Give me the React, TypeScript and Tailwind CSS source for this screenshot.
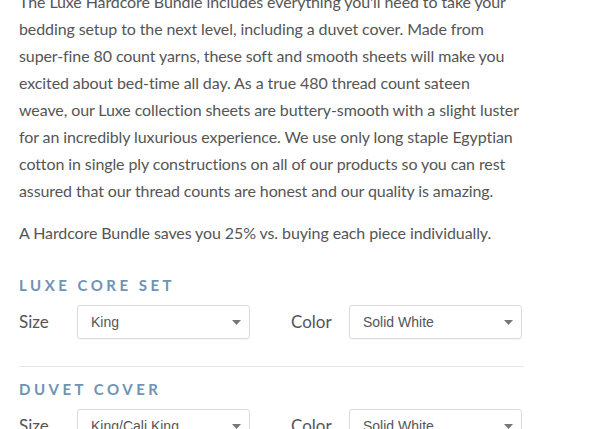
import React from "react";

const lines = [
  "The Luxe Hardcore Bundle includes everything you'll need to take your",
  "bedding setup to the next level, including a duvet cover. Made from",
  "super-fine 80 count yarns, these soft and smooth sheets will make you",
  "excited about bed-time all day. As a true 480 thread count sateen",
  "weave, our Luxe collection sheets are buttery-smooth with a slight luster",
  "for an incredibly luxurious experience. We use only long staple Egyptian",
  "cotton in single ply constructions on all of our products so you can rest",
  "assured that our thread counts are honest and our quality is amazing.",
];

function Select({ value }: { value: string }) {
  return (
    <div className="flex h-[34px] w-[173px] items-center justify-between rounded-[3px] border border-[#dcdcdc] bg-white pl-[13px] pr-[8px] shadow-[0_1px_1px_rgba(0,0,0,0.04)]">
      <span className="text-[14px] text-[#555]" style={{ fontFamily: '"Liberation Sans", Arial, sans-serif' }}>
        {value}
      </span>
      <svg width="9" height="5" viewBox="0 0 9 5">
        <path d="M0 0 L9 0 L4.5 5 Z" fill="#777" />
      </svg>
    </div>
  );
}

function Row({ size, color }: { size: string; color: string }) {
  return (
    <div className="grid grid-cols-[232px_232px] gap-x-[40px]">
      <div className="flex items-center">
        <span className="w-[58px] text-[17px] text-[#555]">Size</span>
        <Select value={size} />
      </div>
      <div className="flex items-center">
        <span className="w-[58px] text-[17px] text-[#555]">Color</span>
        <Select value={color} />
      </div>
    </div>
  );
}

export default function App() {
  return (
    <div
      className="h-[429px] w-[595px] overflow-hidden bg-white pl-[19px] text-[#555]"
      style={{ fontFamily: 'Lato, "Open Sans", sans-serif' }}
    >
      <div className="w-[505px]">
        <div className="mt-[-12px] text-[16px] leading-[27px] tracking-[-0.1px]">
          {lines.map((l, i) => (
            <div key={i} className="whitespace-nowrap">
              {l}
            </div>
          ))}
        </div>
        <p className="mt-[15px] whitespace-nowrap text-[16px] leading-[27px] tracking-[-0.1px]">
          A Hardcore Bundle saves you 25% vs. buying each piece individually.
        </p>
        <h3 className="mt-[29px] text-[15px] font-bold uppercase leading-[20px] tracking-[3.5px] text-[#6f93b3]">
          Luxe Core Set
        </h3>
        <div className="mt-[10px]">
          <Row size="King" color="Solid White" />
        </div>
        <div className="mt-[27px] h-px bg-[#e6e6e6]" />
        <h3 className="mt-[12px] text-[15px] font-bold uppercase leading-[20px] tracking-[3.5px] text-[#6f93b3]">
          Duvet Cover
        </h3>
        <div className="mt-[10px]">
          <Row size="King/Cali King" color="Solid White" />
        </div>
      </div>
    </div>
  );
}
